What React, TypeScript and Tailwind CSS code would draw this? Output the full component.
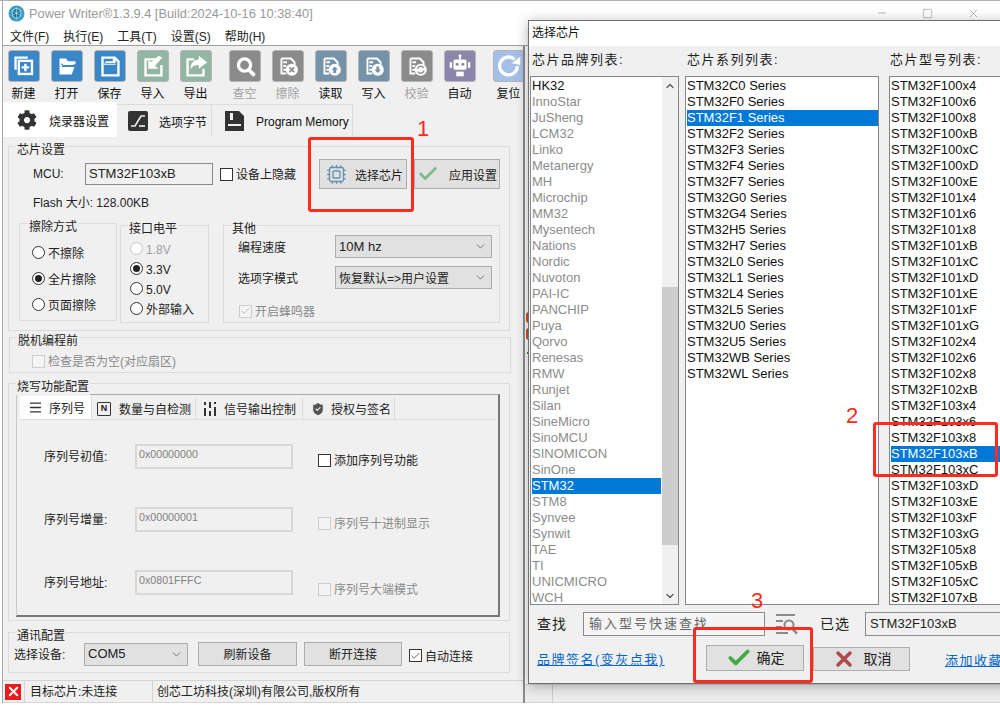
import type { ReactNode } from 'react';
import { Check, ChevronDown, ChevronUp, Cpu, Menu as MenuIcon, Minus, ShieldCheck, Square, X } from 'lucide-react';
import { FaCog } from 'react-icons/fa';
import clsx from 'clsx';

const BRANDS = ['HK32', 'InnoStar', 'JuSheng', 'LCM32', 'Linko', 'Metanergy', 'MH', 'Microchip', 'MM32', 'Mysentech', 'Nations', 'Nordic', 'Nuvoton', 'PAI-IC', 'PANCHIP', 'Puya', 'Qorvo', 'Renesas', 'RMW', 'Runjet', 'Silan', 'SineMicro', 'SinoMCU', 'SINOMICON', 'SinOne', 'STM32', 'STM8', 'Synvee', 'Synwit', 'TAE', 'TI', 'UNICMICRO', 'WCH'];
const SERIES = ['C0', 'F0', 'F1', 'F2', 'F3', 'F4', 'F7', 'G0', 'G4', 'H5', 'H7', 'L0', 'L1', 'L4', 'L5', 'U0', 'U5', 'WB', 'WL'].map((s) => `STM32${s} Series`);
const MODELS = ['100x4', '100x6', '100x8', '100xB', '100xC', '100xD', '100xE', '101x4', '101x6', '101x8', '101xB', '101xC', '101xD', '101xE', '101xF', '101xG', '102x4', '102x6', '102x8', '102xB', '103x4', '103x6', '103x8', '103xB', '103xC', '103xD', '103xE', '103xF', '103xG', '105x8', '105xB', '105xC', '107xB'].map((s) => `STM32F${s}`);

const page = (
  <>
    <path d="M9 8h10l4 4v3" fill="none" stroke="#fff" strokeWidth="2" />
    <path d="M9 8v16h5M11 12h4M11 16h3M11 20h3" fill="none" stroke="#fff" strokeWidth="2" />
    <circle cx="20" cy="20" r="6.5" fill="#fff" />
  </>
);

const TOOL_ICONS: Record<string, ReactNode> = {
  new: (
    <>
      <path d="M7 20V7h13" fill="none" stroke="#fff" strokeWidth="2.5" />
      <rect x="10.5" y="10.5" width="14" height="14" fill="none" stroke="#fff" strokeWidth="2.5" />
      <path d="M17.5 13.5v8M13.5 17.5h8" stroke="#fff" strokeWidth="2.5" />
    </>
  ),
  open: <path d="M8 25V8h7l2 3h8v3H12l-2 3h14l-3 8zM10 13v2h13v-1H12z" fill="#fff" fillRule="evenodd" />,
  save: (
    <>
      <path d="M8 7h13l4 4v15H8z" fill="none" stroke="#fff" strokeWidth="2.5" />
      <path d="M11 14h11V8h-3v3h-8z M10 13h12v2H10z" fill="#fff" />
    </>
  ),
  import: (
    <>
      <path d="M20 9H8v17h17V15" fill="none" stroke="#fff" strokeWidth="2.5" />
      <path d="M26 7l-8 9 4 3H11V9l3 3 8-7z" fill="#fff" />
    </>
  ),
  export: (
    <>
      <path d="M14 9H7v17h17v-7" fill="none" stroke="#fff" strokeWidth="2.5" />
      <path d="M19 5l9 7-9 7v-4c-4 0-7 1-9 5 0-6 3-11 9-11z" fill="#fff" />
    </>
  ),
  search: (
    <>
      <circle cx="15.5" cy="15" r="6.5" fill="none" stroke="#fff" strokeWidth="3.5" />
      <path d="M20 20l5 5" stroke="#fff" strokeWidth="4" strokeLinecap="round" />
    </>
  ),
  erase: (
    <>
      {page}
      <path d="M17.5 17.5l5 5M22.5 17.5l-5 5" stroke="#8b8b8b" strokeWidth="1.8" />
    </>
  ),
  read: (
    <>
      {page}
      <path d="M20 16.5l-3.5 3.5h2v3.5h3V20h2z" fill="#7592a8" />
    </>
  ),
  write: (
    <>
      {page}
      <path d="M20 23.5l3.5-3.5h-2v-3.5h-3V20h-2z" fill="#7592a8" />
    </>
  ),
  verify: (
    <>
      {page}
      <path d="M16.5 19a3.6 3.6 0 0 1 6.5-1M23.5 21a3.6 3.6 0 0 1-6.5 1" fill="none" stroke="#8b8b8b" strokeWidth="1.5" />
    </>
  ),
  auto: (
    <>
      <path d="M16 5v4" stroke="#fff" strokeWidth="2" />
      <circle cx="16" cy="5" r="1.6" fill="#fff" />
      <rect x="9" y="9" width="14" height="11" rx="2" fill="#fff" />
      <rect x="5" y="12" width="2.5" height="6" fill="#fff" />
      <rect x="24.5" y="12" width="2.5" height="6" fill="#fff" />
      <circle cx="13" cy="14" r="1.6" fill="#8c86aa" />
      <circle cx="19" cy="14" r="1.6" fill="#8c86aa" />
      <path d="M12 22h8v5h-8z" fill="#fff" />
    </>
  ),
  reset: (
    <>
      <path d="M25 16a9.5 9.5 0 1 1-3-7" fill="none" stroke="#fff" strokeWidth="3.5" />
      <path d="M19 13l9 2 0-9z" fill="#fff" />
    </>
  ),
};

const TOOLS_A = [
  { id: 'new', label: '新建', bg: 'bg-[#3a87c8]' },
  { id: 'open', label: '打开', bg: 'bg-[#3a87c8]' },
  { id: 'save', label: '保存', bg: 'bg-[#3a87c8]' },
  { id: 'import', label: '导入', bg: 'bg-[#93b5a3]' },
  { id: 'export', label: '导出', bg: 'bg-[#93b5a3]' },
];
const TOOLS_B = [
  { id: 'search', label: '查空', bg: 'bg-[#8b8b8b]', off: true },
  { id: 'erase', label: '擦除', bg: 'bg-[#8b8b8b]', off: true },
  { id: 'read', label: '读取', bg: 'bg-[#7592a8]' },
  { id: 'write', label: '写入', bg: 'bg-[#7592a8]' },
  { id: 'verify', label: '校验', bg: 'bg-[#8b8b8b]', off: true },
  { id: 'auto', label: '自动', bg: 'bg-[#8c86aa]' },
];

type Tool = { id: string; label: string; bg: string; off?: boolean };

const ToolButton = ({ tool }: { tool: Tool }) => (
  <div className="flex w-[43px] shrink-0 flex-col items-center">
    <div className={clsx('h-[32px] w-[32px] rounded-[3px] border border-[#b4b4b4]', tool.bg)}>
      <svg viewBox="0 0 32 32" className="h-full w-full">
        {TOOL_ICONS[tool.id]}
      </svg>
    </div>
    <span className={clsx('mt-[4px] text-[12px] leading-[16px]', tool.off ? 'text-[#a0a0a0]' : 'text-[#111]')}>{tool.label}</span>
  </div>
);

const Group = ({ label, className, labelClass, children }: { label: string; className?: string; labelClass?: string; children: ReactNode }) => (
  <div className={clsx('relative border border-[#dcdcdc]', className)}>
    <span className={clsx('absolute -top-[5px] bg-[#f0f0f0] px-[1px] text-[12px] leading-[16px] text-[#222]', labelClass ?? 'left-[7px]')}>{label}</span>
    {children}
  </div>
);

const Radio = ({ label, on, off, className }: { label: string; on?: boolean; off?: boolean; className?: string }) => (
  <div className={clsx('flex items-center gap-[3px] text-[12px]', off ? 'text-[#a0a0a0]' : 'text-[#222]', className)}>
    <span className={clsx('flex h-[13px] w-[13px] items-center justify-center rounded-full border bg-white', off ? 'border-[#c4c4c4]' : 'border-[#333]')}>
      {on && <span className="h-[7px] w-[7px] rounded-full bg-[#222]" />}
    </span>
    <span className="pt-[3px]">{label}</span>
  </div>
);

const Checkbox = ({ label, on, off, className }: { label: string; on?: boolean; off?: boolean; className?: string }) => (
  <div className={clsx('flex items-center gap-[3px] text-[12px] leading-[14px]', off ? 'text-[#8a8a8a]' : 'text-[#222]', className)}>
    <span className={clsx('flex h-[13px] w-[13px] shrink-0 items-center justify-center border', off ? 'border-[#cdcdcd] bg-[#f4f4f4]' : 'border-[#333] bg-white')}>
      {on && <Check size={12} strokeWidth={1.6} color={off ? '#a8a8a8' : '#333'} />}
    </span>
    <span className="pt-[2px]">{label}</span>
  </div>
);

const Select = ({ value, className, textClass }: { value: string; className?: string; textClass?: string }) => (
  <div className={clsx('flex items-center justify-between border border-[#adadad] bg-[#e1e1e1] pl-[3px] pr-[4px] text-[#222]', className)}>
    <span className={textClass ?? 'text-[13px]'}>{value}</span>
    <ChevronDown size={13} color="#555" strokeWidth={1.4} />
  </div>
);

const Btn = ({ children, className }: { children: ReactNode; className?: string }) => (
  <div className={clsx('flex items-center justify-center border border-[#adadad] bg-[#e1e1e1] text-[12px] text-[#222]', className)}>{children}</div>
);

const SerialRow = ({ label, value, check, on, checkTop, off, rowClass }: { label: string; value: string; check: string; on?: boolean; checkTop: string; off?: boolean; rowClass?: string }) => (
  <div className={clsx('flex h-[25px] items-start', rowClass)}>
    <span className="h-[25px] w-[115px] pl-[24px] text-[12px] leading-[26px] text-[#222]">{label}</span>
    <div className="h-[25px] w-[158px] border-2 border-[#d8d8d8] pl-[2px] text-[10.7px] leading-[17px] text-[#808080]">{value}</div>
    <Checkbox label={check} on={on} off={off} className={clsx('ml-[25px]', checkTop)} />
  </div>
);

const SubTab = ({ label, icon, active, className }: { label: string; icon: ReactNode; active?: boolean; className?: string }) => (
  <div className={clsx('flex items-center border-r border-[#dcdcdc] text-[12px] text-[#222]', active ? 'h-[23px] bg-white' : 'h-[21px] bg-[#f0f0f0]', className)}>
    {icon}
    <span className="pt-[3px]">{label}</span>
  </div>
);

const ListBox = ({ items, selected, dim, className }: { items: string[]; selected: string; dim?: boolean; className?: string }) => (
  <div className={clsx('overflow-hidden border border-[#828790] bg-white pl-[1px] pt-[1px] text-[13px] leading-[16px]', className)}>
    {items.map((item, i) => (
      <div
        key={item}
        className={clsx(
          'h-[16px] whitespace-nowrap',
          item === selected ? 'bg-[#0078d7] text-white' : dim && i > 0 ? 'text-[#8c8c8c]' : 'text-[#111]',
        )}
      >
        {item}
      </div>
    ))}
  </div>
);

const MainPanel = () => (
  <div className="flex w-[521px] shrink-0 flex-col border-l border-[#a8a8a8] bg-[#f0f0f0]">
    {/* toolbar */}
    <div className="-ml-[1px] flex h-[56px] pt-[4px]">
      {TOOLS_A.map((t) => <ToolButton key={t.id} tool={t} />)}
      <div className="mx-[3px] h-[52px] w-px bg-[#8a8a8a]" />
      {TOOLS_B.map((t) => <ToolButton key={t.id} tool={t} />)}
      <div className="mx-[3px] h-[52px] w-px bg-[#8a8a8a]" />
      <ToolButton tool={{ id: 'reset', label: '复位', bg: 'bg-[#a6bfe8]' }} />
    </div>

    {/* tabs */}
    <div className="flex h-[35px] items-end text-[12px] text-[#111]">
      <div className="flex h-[35px] w-[114px] items-center bg-white pl-[14px]">
        <FaCog size={20} color="#333" />
        <span className="ml-[12px] pt-[4px]">烧录器设置</span>
      </div>
      <div className="flex h-[33px] w-[95px] items-center border-r border-t border-[#dcdcdc] pl-[11px]">
        <svg width="20" height="20" viewBox="0 0 20 20">
          <rect width="20" height="20" rx="2" fill="#333" />
          <path d="M3 15h4l6-10h4" fill="none" stroke="#f0f0f0" strokeWidth="1.6" />
          <path d="M11 15h6" stroke="#f0f0f0" strokeWidth="1.6" />
        </svg>
        <span className="ml-[11px] pt-[4px]">选项字节</span>
      </div>
      <div className="flex h-[33px] w-[141px] items-center border-r border-t border-[#dcdcdc] pl-[13px]">
        <svg width="19" height="20" viewBox="0 0 19 20" className="shrink-0">
          <path d="M0 0h14l5 5v15H0z" fill="#333" />
          <rect x="5" y="2" width="3" height="7" fill="#f0f0f0" />
          <rect x="3" y="13" width="13" height="2" fill="#f0f0f0" />
        </svg>
        <span className="ml-[12px] whitespace-nowrap pt-[2px] text-[12px]">Program Memory</span>
      </div>
    </div>

    {/* content */}
    <div className="pl-[5px] pt-[9px]">
      <Group label="芯片设置" className="h-[185px] w-[502px] pt-[12px]">
        <div className="flex h-[30px] items-center pl-[24px]">
          <span className="w-[52px] text-[12px] text-[#222]">MCU:</span>
          <div className="flex h-[22px] w-[128px] items-center border border-[#8a8a8a] pl-[3px] text-[13px] text-[#222]">STM32F103xB</div>
          <Checkbox label="设备上隐藏" className="ml-[7px] w-[99px]" />
          <Btn className="h-[30px] w-[88px] gap-[8px] pl-[3px]">
            <Cpu size={21} color="#5f93ad" strokeWidth={1.5} />
            <span className="pt-[3px]">选择芯片</span>
          </Btn>
          <Btn className="ml-[7px] h-[30px] w-[86px] gap-[10px]">
            <Check size={22} color="#7dbb8b" strokeWidth={3} />
            <span className="pt-[3px]">应用设置</span>
          </Btn>
        </div>
        <div className="mt-[6px] h-[16px] pl-[24px] text-[12px] leading-[16px] text-[#222]">Flash 大小: 128.00KB</div>
        <div className="mt-[12px] flex items-start pl-[10px]">
          <Group label="擦除方式" labelClass="left-[8px]" className="h-[98px] w-[98px] pl-[12px] pt-[15px]">
            <Radio label="不擦除" className="h-[26px]" />
            <Radio label="全片擦除" on className="h-[26px]" />
            <Radio label="页面擦除" className="h-[26px]" />
          </Group>
          <Group label="接口电平" className="ml-[3px] mt-[2px] h-[98px] w-[89px] pl-[9px] pt-[12px]">
            <Radio label="1.8V" off className="h-[20px]" />
            <Radio label="3.3V" on className="h-[20px]" />
            <Radio label="5.0V" className="h-[20px]" />
            <Radio label="外部输入" className="h-[20px]" />
          </Group>
          <Group label="其他" className="ml-[14px] mt-[2px] h-[98px] w-[277px] pl-[14px] pt-[9px]">
            <div className="flex items-center">
              <span className="w-[97px] pt-[3px] text-[12px] text-[#222]">编程速度</span>
              <Select value="10M hz" className="h-[23px] w-[157px]" />
            </div>
            <div className="mt-[8px] flex items-center">
              <span className="w-[97px] pt-[3px] text-[12px] text-[#222]">选项字模式</span>
              <Select value="恢复默认=>用户设置" textClass="pt-[2px] text-[12px]" className="h-[23px] w-[157px]" />
            </div>
            <Checkbox label="开启蜂鸣器" on off className="ml-[1px] mt-[14px]" />
          </Group>
        </div>
      </Group>

      <Group label="脱机编程前" className="ml-[1px] mt-[6px] h-[36px] w-[502px] pl-[22px] pt-[15px]">
        <Checkbox label="检查是否为空(对应扇区)" off />
      </Group>

      <Group label="烧写功能配置" className="mt-[10px] h-[238px] w-[502px] pl-[7px] pt-[10px]">
        <div className="h-[223px] w-[484px] border-b-2 border-l border-r-2 border-t border-b-[#777] border-l-[#c8c8c8] border-r-[#777] border-t-[#a8a8a8] pl-[3px] pt-[2px]">
          <div className="flex h-[23px] w-[476px] items-end border-b border-[#dcdcdc]">
            <SubTab active label="序列号" className="w-[72px] gap-[6px] pl-[8px]" icon={<MenuIcon size={15} color="#333" strokeWidth={2.2} />} />
            <SubTab
              label="数量与自检测"
              className="w-[104px] gap-[8px] pl-[5px]"
              icon={
                <span className="flex h-[14px] w-[14px] items-center justify-center rounded-[1px] border border-[#333] text-[9px] font-bold leading-none">N</span>
              }
            />
            <SubTab
              label="信号输出控制"
              className="w-[107px] gap-[7px] pl-[7px]"
              icon={
                <svg width="14" height="14" viewBox="0 0 14 14">
                  <path d="M2 0v3M2 6v8M7 0v6M7 9v5M12 0v2M12 5v9" stroke="#333" strokeWidth="2" />
                </svg>
              }
            />
            <SubTab label="授权与签名" className="w-[92px] gap-[5px] pl-[7px]" icon={<ShieldCheck size={16} color="#f0f0f0" fill="#555" strokeWidth={1.6} />} />
          </div>
          <SerialRow label="序列号初值:" value="0x00000000" check="添加序列号功能" checkTop="mt-[8px]" rowClass="mt-[24px]" />
          <SerialRow label="序列号增量:" value="0x00000001" check="序列号十进制显示" off checkTop="mt-[8px]" rowClass="mt-[38px]" />
          <SerialRow label="序列号地址:" value="0x0801FFFC" check="序列号大端模式" off checkTop="mt-[11px]" rowClass="mt-[38px]" />
        </div>
      </Group>

      <Group label="通讯配置" className="mt-[11px] flex h-[41px] w-[502px] items-center pl-[5px] pt-[3px]">
        <span className="w-[70px] pt-[2px] text-[12px] text-[#222]">选择设备:</span>
        <Select value="COM5" className="h-[23px] w-[104px]" />
        <Btn className="ml-[10px] h-[24px] w-[99px]">
          <span className="pt-[2px]">刷新设备</span>
        </Btn>
        <Btn className="ml-[7px] h-[24px] w-[98px]">
          <span className="pt-[2px]">断开连接</span>
        </Btn>
        <Checkbox label="自动连接" on className="ml-[7px] mt-[3px]" />
      </Group>
    </div>

    {/* status bar */}
    <div className="mt-[7px] flex h-[23px] items-center border-y border-[#d4d4d4] pl-[2px] text-[12px] text-[#222]">
      <span className="flex h-[16px] w-[16px] items-center justify-center bg-[#e81c1c]">
        <X size={15} color="#fff" strokeWidth={3} />
      </span>
      <span className="ml-[3px] h-full border-l border-[#d4d4d4]" />
      <span className="w-[127px] pl-[5px]">目标芯片:未连接</span>
      <span className="h-full border-l border-[#d4d4d4]" />
      <span className="pl-[4px]">创芯工坊科技(深圳)有限公司,版权所有</span>
    </div>
  </div>
);

// sliver of the code window behind the dialog
const BehindWindow = () => (
  <div className="flex flex-1 flex-col border-l-2 border-[#8a8a8a]">
    <div className="flex flex-1 flex-col overflow-hidden bg-white">
      <div className="ml-[1px] mt-[266px] h-[11px] w-[5px] rounded-l-[3px] bg-[#c8512c]" />
      <div className="ml-[1px] mt-[5px] h-[12px] w-[5px] rounded-l-[3px] bg-[#c8512c]" />
      <div className="ml-[2px] mt-[12px] h-[2px] w-[3px] bg-[#3a7a2a]" />
      <div className="mt-[11px] flex flex-col gap-[15.5px] pl-[3px]">
        {Array.from({ length: 17 }, (_, i) => (
          <div key={i} className="h-[1px] w-[3px] bg-[#2233aa]" />
        ))}
      </div>
    </div>
    <div className="flex h-[19px] border-y border-[#d4d4d4] bg-[#ececec] pl-[27px]">
      <div className="h-full w-px bg-[#cccccc]" />
    </div>
  </div>
);

const Dialog = () => (
  <div className="absolute left-[528px] top-[19px] flex h-[664px] w-[520px] flex-col border border-[#707070] bg-[#f0f0f0] shadow-[0_2px_12px_rgba(0,0,0,0.3)]">
    <div className="h-[25px] bg-white pl-[3px] text-[12px] leading-[25px] text-[#111]">选择芯片</div>
    <div className="flex h-[30px] items-center pb-[3px] pl-[3px] text-[13px] tracking-[1.5px] text-[#222]">
      <span className="w-[155px]">芯片品牌列表:</span>
      <span className="w-[203px]">芯片系列列表:</span>
      <span>芯片型号列表:</span>
    </div>
    <div className="flex h-[529px] pl-[1px]">
      <div className="relative h-full w-[149px] shrink-0">
        <ListBox items={BRANDS} selected="STM32" dim className="h-full w-full pr-[17px]" />
        {/* scrollbar */}
        <div className="absolute right-[1px] top-[1px] flex h-[527px] w-[16px] flex-col bg-[#f0f0f0]">
          <div className="flex h-[17px] items-center justify-center">
            <ChevronUp size={12} color="#555" strokeWidth={2.4} />
          </div>
          <div className="mt-[193px] h-[258px] bg-[#cdcdcd]" />
          <div className="mt-auto flex h-[17px] items-center justify-center">
            <ChevronDown size={12} color="#555" strokeWidth={2.4} />
          </div>
        </div>
      </div>
      <ListBox items={SERIES} selected="STM32F1 Series" className="ml-[6px] h-full w-[194px]" />
      <ListBox items={MODELS} selected="STM32F103xB" className="ml-[10px] h-full w-[150px]" />
    </div>
    <div className="flex h-[36px] items-center pt-[2px] text-[#222]">
      <span className="ml-[8px] w-[46px] text-[14px] tracking-[1px]">查找</span>
      <div className="h-[24px] w-[182px] border border-[#8a8a8a] bg-[#f4f4f4] pl-[5px] text-[13px] leading-[22px] tracking-[2px] text-[#666]">输入型号快速查找</div>
      <svg width="24" height="22" viewBox="0 0 24 22" className="ml-[10px]">
        <path d="M1 2h19M1 8h7M1 14h6M1 20h12" stroke="#8a8a8a" strokeWidth="2" />
        <circle cx="14" cy="12" r="4.5" fill="none" stroke="#8a8a8a" strokeWidth="2" />
        <path d="M17 15.5l5 5" stroke="#8a8a8a" strokeWidth="2.5" />
      </svg>
      <span className="ml-[21px] w-[45px] text-[14px] tracking-[1px]">已选</span>
      <div className="h-[24px] w-[180px] border border-[#8a8a8a] pl-[4px] text-[13px] leading-[22px]">STM32F103xB</div>
    </div>
    <div className="flex items-start pl-[8px] pt-[4px]">
      <span className="mt-[6px] w-[169px] text-[13px] leading-[18px] tracking-[1.5px] text-[#0066cc] underline">品牌签名(变灰点我)</span>
      <Btn className="h-[26px] w-[98px] gap-[5px] text-[14px]">
        <Check size={26} color="#45a845" strokeWidth={3.5} />
        确定
      </Btn>
      <Btn className="ml-[9px] mt-[2px] h-[24px] w-[97px] gap-[8px] text-[14px]">
        <X size={24} color="#b04b4b" strokeWidth={3.5} />
        取消
      </Btn>
      <span className="ml-[35px] mt-[7px] whitespace-nowrap text-[13px] leading-[18px] tracking-[1.5px] text-[#0066cc] underline">添加收藏</span>
    </div>
  </div>
);

const RedBox = ({ className }: { className: string }) => <div className={clsx('absolute rounded-[3px] border-[3px] border-[#ff2a20]', className)} />;
const RedNumber = ({ n, className }: { n: string; className: string }) => (
  <span className={clsx('absolute text-[22px] leading-[24px] text-[#ff2a20]', className)}>{n}</span>
);

export default function App() {
  return (
    <div className="relative flex h-[705px] w-[1000px] flex-col overflow-hidden border-t border-[#b0b0b0] bg-white pb-[2px] pl-[2px] [font-family:'Liberation_Sans','Noto_Sans_CJK_SC',sans-serif]">
      {/* title bar */}
      <div className="flex h-[24px] shrink-0 items-center border-l border-[#a8a8a8] pl-[5px]">
        <svg width="17" height="17" viewBox="0 0 16 16">
          <circle cx="8" cy="8" r="7.5" fill="#3b9cc4" />
          <path d="M8 3l4 2v5l-4 3-4-3V5z" fill="#1f6f94" stroke="#bfe3f0" strokeWidth="0.8" />
          <path d="M8 3v10M4 5l8 5M12 5l-8 5" stroke="#bfe3f0" strokeWidth="0.6" />
        </svg>
        <span className="ml-[4px] pt-[1px] text-[12.8px] text-[#999]">Power Writer®1.3.9.4 [Build:2024-10-16 10:38:40]</span>
        <div className="ml-auto flex items-center gap-[34px] pr-[20px]">
          <Minus size={12} color="#777" strokeWidth={1} />
          <Square size={11} color="#777" strokeWidth={1} />
          <X size={13} color="#777" strokeWidth={1} />
        </div>
      </div>
      {/* menu bar */}
      <div className="flex h-[21px] shrink-0 items-center gap-[14px] border-b border-l border-b-[#a0a0a0] border-l-[#a8a8a8] pl-[7px] pt-[3px] text-[12px] text-[#222]">
        <span>文件(F)</span>
        <span>执行(E)</span>
        <span>工具(T)</span>
        <span>设置(S)</span>
        <span>帮助(H)</span>
      </div>
      <div className="flex min-h-0 flex-1">
        <MainPanel />
        <BehindWindow />
      </div>

      <Dialog />

      <RedBox className="left-[308px] top-[136px] h-[75px] w-[106px]" />
      <RedNumber n="1" className="left-[417px] top-[116px]" />
      <RedBox className="left-[873px] top-[421px] h-[55px] w-[125px]" />
      <RedNumber n="2" className="left-[846px] top-[403px]" />
      <RedBox className="left-[693px] top-[626px] h-[56px] w-[120px]" />
      <RedNumber n="3" className="left-[751px] top-[588px]" />
    </div>
  );
}
